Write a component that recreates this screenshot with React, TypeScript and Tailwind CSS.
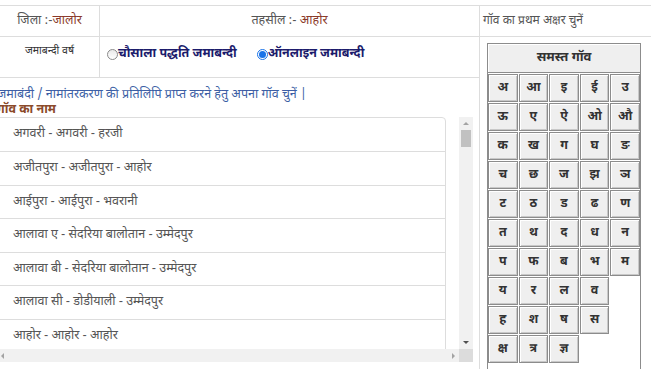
const letterRows = [
  ["अ", "आ", "इ", "ई", "उ"],
  ["ऊ", "ए", "ऐ", "ओ", "औ"],
  ["क", "ख", "ग", "घ", "ङ"],
  ["च", "छ", "ज", "झ", "ञ"],
  ["ट", "ठ", "ड", "ढ", "ण"],
  ["त", "थ", "द", "ध", "न"],
  ["प", "फ", "ब", "भ", "म"],
  ["य", "र", "ल", "व"],
  ["ह", "श", "ष", "स"],
  ["क्ष", "त्र", "ज्ञ"],
];

const villages = [
  "अगवरी - अगवरी - हरजी",
  "अजीतपुरा - अजीतपुरा - आहोर",
  "आईपुरा - आईपुरा - भवरानी",
  "आलावा ए - सेदरिया बालोतान - उम्मेदपुर",
  "आलावा बी - सेदरिया बालोतान - उम्मेदपुर",
  "आलावा सी - डोडीयाली - उम्मेदपुर",
  "आहोर - आहोर - आहोर",
];

function Radio({ checked, label }: { checked?: boolean; label: string }) {
  return (
    <label className="flex items-center">
      {checked ? (
        <span className="flex h-[11px] w-[11px] items-center justify-center rounded-full border border-[#1a73e8] bg-white">
          <span className="h-[7px] w-[7px] rounded-full bg-[#1a73e8]" />
        </span>
      ) : (
        <span className="h-[11px] w-[11px] rounded-full border border-[#8a8a8a] bg-gradient-to-b from-[#e9e9e9] to-white" />
      )}
      <span className="text-[12.5px] font-bold text-[#1c1c6c]">{label}</span>
    </label>
  );
}

function LetterButton({ children }: { children: string }) {
  return (
    <button className="flex h-[28px] items-center justify-center border border-[#8c8c8c] bg-[#efefef] text-[12.5px] font-bold text-[#333] shadow-[inset_1px_1px_0_#fff,inset_-1px_-1px_0_#c8c8c8]">
      {children}
    </button>
  );
}

export default function App() {
  return (
    <div className="h-[369px] w-[651px] overflow-hidden bg-white pt-[5px] font-['Noto_Sans_Devanagari','Noto_Sans','Liberation_Sans',sans-serif] text-[#555]">
      <div className="flex border-t border-[#dddddd]">
        {/* left side */}
        <div className="w-[479px] shrink-0">
          <div className="flex h-[31px] border-b border-[#dddddd]">
            <div className="flex w-[100px] items-center justify-center border-r border-[#dddddd] text-[12.5px]">
              जिला :-<span className="text-[#8b3a2a]">जालोर</span>
            </div>
            <div className="flex flex-1 items-center justify-center text-[12.5px]">
              तहसील :-&nbsp;<span className="text-[#8b3a2a]">आहोर</span>
            </div>
          </div>
          <div className="flex h-[41px] border-b border-[#dddddd]">
            <div className="w-[100px] border-r border-[#dddddd] pt-[7px] text-center text-[10.5px] text-[#333]">
              जमाबन्दी वर्ष
            </div>
            <div className="flex flex-1 items-start gap-[20px] pl-[7px] pt-[8px]">
              <Radio label="चौसाला पद्धति जमाबन्दी" />
              <Radio checked label="ऑनलाइन जमाबन्दी" />
            </div>
          </div>

          <div className="-ml-[3px] pt-[10px]">
            <p className="text-[12.5px] leading-[15px] text-[#3d5fa5]">
              जमाबंदी / नामांतरकरण की प्रतिलिपि प्राप्त करने हेतु अपना गॉव चुनें |
            </p>
            <p className="text-[12.5px] font-bold leading-[14px] text-[#8b4a2a]">गॉव का नाम</p>
            <div className="flex">
              <div className="w-[462px]">
                <div className="h-[232px] overflow-hidden">
                  <ul className="w-[449px] rounded-tr-[4px] border border-[#dddddd]">
                    {villages.map((v, i) => (
                      <li
                        key={v}
                        className={`flex items-center border-b border-[#dddddd] pl-[15px] text-[12.5px] text-[#555] ${i === 0 ? "h-[34px]" : "h-[33.6px]"}`}
                      >
                        {v}
                      </li>
                    ))}
                  </ul>
                </div>
                {/* horizontal scrollbar */}
                <div className="flex h-[13px] items-center justify-between bg-[#f1f1f1] px-[4px]">
                  <span className="h-0 w-0 border-y-[3px] border-r-[3px] border-y-transparent border-r-[#a3a3a3]" />
                  <span className="h-0 w-0 border-y-[3px] border-l-[3px] border-y-transparent border-l-[#a3a3a3]" />
                </div>
              </div>
              {/* vertical scrollbar */}
              <div className="flex h-[245px] w-[14px] flex-col bg-[#f1f1f1]">
                <div className="flex h-[13px] items-center justify-center">
                  <span className="h-0 w-0 border-x-[3px] border-b-[3px] border-x-transparent border-b-[#a3a3a3]" />
                </div>
                <div className="mx-[2px] h-[17px] bg-[#c1c1c1]" />
                <div className="flex-1" />
                <div className="flex h-[13px] items-center justify-center">
                  <span className="h-0 w-0 border-x-[3px] border-t-[3px] border-x-transparent border-t-[#505050]" />
                </div>
                <div className="h-[13px] bg-[#dcdcdc]" />
              </div>
            </div>
          </div>
        </div>

        {/* right side */}
        <div className="flex-1 border-l border-[#dddddd]">
          <div className="flex h-[31px] items-center border-b border-[#dddddd] pl-[3px] text-[12px]">
            गॉव का प्रथम अक्षर चुनें
          </div>
          <div className="ml-[7px] mt-[6px] h-[330px] w-[154px] border border-[#8c8c8c]">
            <button className="flex h-[29px] w-full items-center justify-center border-b border-[#8c8c8c] bg-[#efefef] text-[13px] font-bold text-[#333] shadow-[inset_1px_1px_0_#fff]">
              समस्त गॉव
            </button>
            <div className="grid grid-cols-5 gap-[1px] pt-[1px]">
              {letterRows.map((row, r) =>
                [0, 1, 2, 3, 4].map((c) =>
                  row[c] ? (
                    <LetterButton key={row[c]}>{row[c]}</LetterButton>
                  ) : (
                    <div key={`e-${r}-${c}`} className="h-[28px]" />
                  ),
                ),
              )}
            </div>
          </div>
        </div>
      </div>
    </div>
  );
}
